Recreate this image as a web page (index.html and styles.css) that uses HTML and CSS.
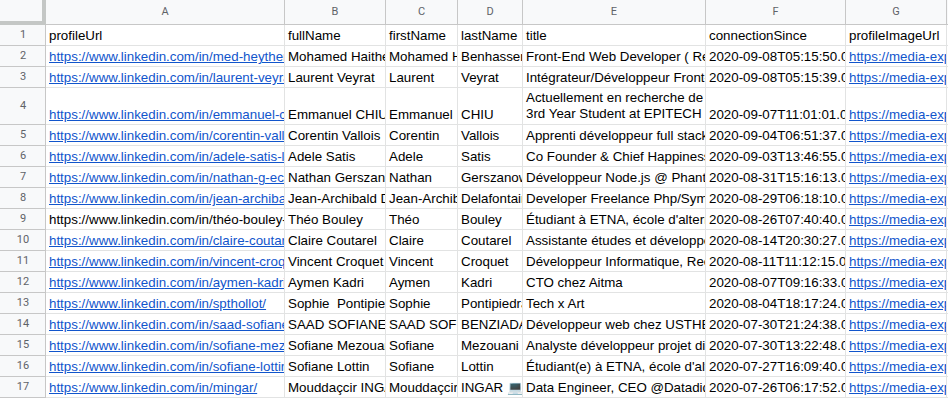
FILE: index.html
```html
<!DOCTYPE html>
<html lang="fr">
<head>
<meta charset="utf-8">
<title>Sheet</title>
<link rel="stylesheet" href="styles.css">
</head>
<body>
<div class="sheet">
  <div class="corner"></div>
  <div class="ch">A</div><div class="ch">B</div><div class="ch">C</div><div class="ch">D</div><div class="ch">E</div><div class="ch">F</div><div class="ch">G</div><div class="ch blank"></div>

  <div class="rh">1</div>
  <div class="c">profileUrl</div><div class="c">fullName</div><div class="c">firstName</div><div class="c">lastName</div><div class="c">title</div><div class="c">connectionSince</div><div class="c">profileImageUrl</div><div class="c"></div>

  <div class="rh">2</div>
  <div class="c"><a>https://www.linkedin.com/in/med-heythem-benhassen/</a></div><div class="c">Mohamed Haithem Benhassen</div><div class="c">Mohamed Haithem</div><div class="c">Benhassen</div><div class="c">Front-End Web Developer ( React )</div><div class="c">2020-09-08T05:15:50.000Z</div><div class="c"><a>https://media-exp1.licdn.com/dms/image/</a></div><div class="c"></div>

  <div class="rh">3</div>
  <div class="c"><a>https://www.linkedin.com/in/laurent-veyrat/</a></div><div class="c">Laurent Veyrat</div><div class="c">Laurent</div><div class="c">Veyrat</div><div class="c">Intégrateur/Développeur Front-end</div><div class="c">2020-09-08T05:15:39.000Z</div><div class="c"><a>https://media-exp1.licdn.com/dms/image/</a></div><div class="c"></div>

  <div class="rh">4</div>
  <div class="c"><a>https://www.linkedin.com/in/emmanuel-chiu/</a></div><div class="c">Emmanuel CHIU</div><div class="c">Emmanuel</div><div class="c">CHIU</div><div class="c wrap"><span>Actuellement en recherche de<br>3rd Year Student at EPITECH</span></div><div class="c">2020-09-07T11:01:01.000Z</div><div class="c"><a>https://media-exp1.licdn.com/dms/image/</a></div><div class="c"></div>

  <div class="rh">5</div>
  <div class="c"><a>https://www.linkedin.com/in/corentin-vallois/</a></div><div class="c">Corentin Vallois</div><div class="c">Corentin</div><div class="c">Vallois</div><div class="c">Apprenti développeur full stack</div><div class="c">2020-09-04T06:51:37.000Z</div><div class="c"><a>https://media-exp1.licdn.com/dms/image/</a></div><div class="c"></div>

  <div class="rh">6</div>
  <div class="c"><a>https://www.linkedin.com/in/adele-satis-lb/</a></div><div class="c">Adele Satis</div><div class="c">Adele</div><div class="c">Satis</div><div class="c">Co Founder &amp; Chief Happiness Officer</div><div class="c">2020-09-03T13:46:55.000Z</div><div class="c"><a>https://media-exp1.licdn.com/dms/image/</a></div><div class="c"></div>

  <div class="rh">7</div>
  <div class="c"><a>https://www.linkedin.com/in/nathan-g-ec/</a></div><div class="c">Nathan Gerszanowicz</div><div class="c">Nathan</div><div class="c">Gerszanowicz</div><div class="c">Développeur Node.js @ Phantombuster</div><div class="c">2020-08-31T15:16:13.000Z</div><div class="c"><a>https://media-exp1.licdn.com/dms/image/</a></div><div class="c"></div>

  <div class="rh">8</div>
  <div class="c"><a>https://www.linkedin.com/in/jean-archibald-delafontaine/</a></div><div class="c">Jean-Archibald Delafontaine</div><div class="c">Jean-Archibald</div><div class="c">Delafontaine</div><div class="c">Developer Freelance Php/Symfony</div><div class="c">2020-08-29T06:18:10.000Z</div><div class="c"><a>https://media-exp1.licdn.com/dms/image/</a></div><div class="c"></div>

  <div class="rh">9</div>
  <div class="c">https://www.linkedin.com/in/théo-bouley-/</div><div class="c">Théo Bouley</div><div class="c">Théo</div><div class="c">Bouley</div><div class="c">Étudiant à ETNA, école d'alternance</div><div class="c">2020-08-26T07:40:40.000Z</div><div class="c"><a>https://media-exp1.licdn.com/dms/image/</a></div><div class="c"></div>

  <div class="rh">10</div>
  <div class="c"><a>https://www.linkedin.com/in/claire-coutarel/</a></div><div class="c">Claire Coutarel</div><div class="c">Claire</div><div class="c">Coutarel</div><div class="c">Assistante études et développement</div><div class="c">2020-08-14T20:30:27.000Z</div><div class="c"><a>https://media-exp1.licdn.com/dms/image/</a></div><div class="c"></div>

  <div class="rh">11</div>
  <div class="c"><a>https://www.linkedin.com/in/vincent-croquet/</a></div><div class="c">Vincent Croquet</div><div class="c">Vincent</div><div class="c">Croquet</div><div class="c">Développeur Informatique, Recherche</div><div class="c">2020-08-11T11:12:15.000Z</div><div class="c"><a>https://media-exp1.licdn.com/dms/image/</a></div><div class="c"></div>

  <div class="rh">12</div>
  <div class="c"><a>https://www.linkedin.com/in/aymen-kadri/</a></div><div class="c">Aymen Kadri</div><div class="c">Aymen</div><div class="c">Kadri</div><div class="c">CTO chez Aitma</div><div class="c">2020-08-07T09:16:33.000Z</div><div class="c"><a>https://media-exp1.licdn.com/dms/image/</a></div><div class="c"></div>

  <div class="rh">13</div>
  <div class="c"><a>https://www.linkedin.com/in/spthollot/</a></div><div class="c">Sophie&nbsp; Pontipiedra</div><div class="c">Sophie</div><div class="c">Pontipiedra</div><div class="c">Tech x Art</div><div class="c">2020-08-04T18:17:24.000Z</div><div class="c"><a>https://media-exp1.licdn.com/dms/image/</a></div><div class="c"></div>

  <div class="rh">14</div>
  <div class="c"><a>https://www.linkedin.com/in/saad-sofiane-benziada/</a></div><div class="c">SAAD SOFIANE BENZIADA</div><div class="c">SAAD SOFIANE</div><div class="c">BENZIADA</div><div class="c">Développeur web chez USTHB</div><div class="c">2020-07-30T21:24:38.000Z</div><div class="c"><a>https://media-exp1.licdn.com/dms/image/</a></div><div class="c"></div>

  <div class="rh">15</div>
  <div class="c"><a>https://www.linkedin.com/in/sofiane-mezouani/</a></div><div class="c">Sofiane Mezouani</div><div class="c">Sofiane</div><div class="c">Mezouani</div><div class="c">Analyste développeur projet digital</div><div class="c">2020-07-30T13:22:48.000Z</div><div class="c"><a>https://media-exp1.licdn.com/dms/image/</a></div><div class="c"></div>

  <div class="rh">16</div>
  <div class="c"><a>https://www.linkedin.com/in/sofiane-lottin/</a></div><div class="c">Sofiane Lottin</div><div class="c">Sofiane</div><div class="c">Lottin</div><div class="c">Étudiant(e) à ETNA, école d'alternance</div><div class="c">2020-07-27T16:09:40.000Z</div><div class="c"><a>https://media-exp1.licdn.com/dms/image/</a></div><div class="c"></div>

  <div class="rh">17</div>
  <div class="c"><a>https://www.linkedin.com/in/mingar/</a></div><div class="c">Mouddaçcir INGAR</div><div class="c">Mouddaçcir</div><div class="c">INGAR 💻</div><div class="c">Data Engineer, CEO @Datadidact</div><div class="c">2020-07-26T06:17:52.000Z</div><div class="c"><a>https://media-exp1.licdn.com/dms/image/</a></div><div class="c"></div>
</div>
</body>
</html>
```
FILE: styles.css
```css
html, body {
  margin: 0;
  padding: 0;
  background: #fff;
  overflow: hidden;
}

.sheet {
  display: grid;
  grid-template-columns: 46px 239px 101px 72px 65px 183px 140px 101px 60px;
  grid-template-rows: 25px 21px 21px 21px 37px repeat(13, 21px);
  width: 1007px;
  font-family: "Liberation Sans", Arial, sans-serif;
  font-size: 10pt;
  color: #000;
}

.corner {
  box-sizing: border-box;
  background: #f8f9fa;
  border-right: 4px solid #c4c7c5;
  border-bottom: 4px solid #c4c7c5;
}

.ch {
  box-sizing: border-box;
  background: #f8f9fa;
  border-right: 1px solid #c7c7c7;
  border-bottom: 1px solid #c7c7c7;
  display: flex;
  align-items: center;
  justify-content: center;
  font-family: Roboto, "Liberation Sans", sans-serif;
  font-size: 11px;
  color: #5f6368;
  padding-bottom: 1px;
}

.rh {
  box-sizing: border-box;
  background: #f8f9fa;
  border-right: 1px solid #c7c7c7;
  border-bottom: 1px solid #c7c7c7;
  display: flex;
  align-items: center;
  justify-content: center;
  font-family: Roboto, "Liberation Sans", sans-serif;
  font-size: 11px;
  color: #5f6368;
  padding-left: 1px;
  padding-bottom: 1px;
}

.c {
  box-sizing: border-box;
  border-right: 1px solid #e2e3e3;
  border-bottom: 1px solid #e2e3e3;
  display: flex;
  align-items: flex-end;
  padding: 0 1px 2px 3px;
  white-space: nowrap;
  overflow: hidden;
  line-height: 15px;
}

.c a {
  color: #1155cc;
  text-decoration: underline;
}

.wrap span {
  line-height: 16px;
}
```
